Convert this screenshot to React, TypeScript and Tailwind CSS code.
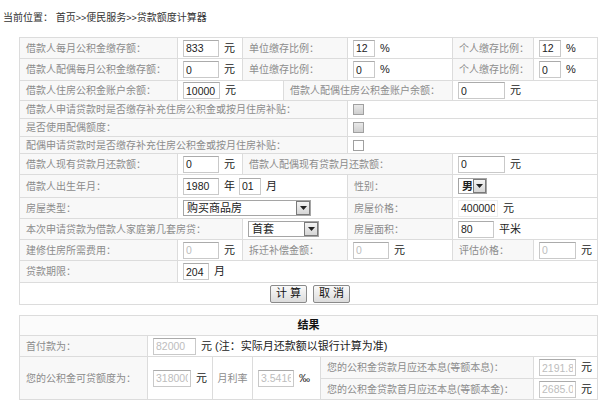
import React from "react";

type Cell = { span?: number; rows?: number; children?: React.ReactNode; className?: string };

function cn(...c: Array<string | false | null | undefined>) {
  return c.filter(Boolean).join(" ");
}

// label cell
function L({ span = 1, rows, children }: Cell) {
  return (
    <td
      colSpan={span}
      rowSpan={rows}
      className="overflow-hidden whitespace-nowrap border border-[#dcdcdc] bg-[#f8f8f8] pl-[6px] text-[10px] text-[#8c8c8c]"
    >
      {children}
    </td>
  );
}

// value cell
function V({ span = 1, rows, children, className }: Cell) {
  return (
    <td
      colSpan={span}
      rowSpan={rows}
      className={cn("overflow-hidden whitespace-nowrap border border-[#dcdcdc] bg-white pl-[5px]", className)}
    >
      <div className="flex items-center">{children}</div>
    </td>
  );
}

function Inp({ value, className, disabled }: { value: string; className: string; disabled?: boolean }) {
  return (
    <input
      readOnly
      value={value}
      className={cn(
        "h-[17px] border border-[#c9c9c9] border-t-[#ababab] bg-white px-[2px] text-[10.5px] outline-none",
        disabled ? "text-[#bdbdbd]" : "text-[#222]",
        className
      )}
    />
  );
}

function U({ children, className }: { children: React.ReactNode; className?: string }) {
  return <span className={cn("ml-[5px] text-[11px] text-[#222]", className)}>{children}</span>;
}

function Arrow() {
  return (
    <span className="flex h-[14px] w-[14px] items-center justify-center border border-[#7a7a7a] bg-gradient-to-b from-[#f4f4f4] to-[#d6d6d6]">
      <svg width="7" height="4" viewBox="0 0 7 4">
        <path d="M0 0h7L3.5 4z" fill="#222" />
      </svg>
    </span>
  );
}

function Sel({ text, className, bold }: { text: string; className: string; bold?: boolean }) {
  return (
    <div
      className={cn(
        "flex h-[16px] items-center justify-between border border-[#a5a5a5] bg-white pl-[3px] pr-0 text-[11px] text-[#222]",
        bold && "font-bold",
        className
      )}
    >
      <span>{text}</span>
      <Arrow />
    </div>
  );
}

function Chk({ gray }: { gray?: boolean }) {
  return (
    <span
      className={cn(
        "inline-block h-[11px] w-[11px] border border-[#a0a0a0]",
        gray ? "bg-gradient-to-b from-[#e9e9e9] to-[#cfcfcf]" : "bg-white"
      )}
    />
  );
}

function Btn({ children }: { children: React.ReactNode }) {
  return (
    <button className="h-[18px] rounded-[2px] border border-[#8a8a8a] bg-gradient-to-b from-[#fafafa] to-[#dcdcdc] px-[5px] text-[11px] leading-none text-[#111]">
      {children}
    </button>
  );
}

export default function App() {
  return (
    <div className="h-[401px] w-[600px] overflow-hidden bg-white font-['Liberation_Sans','Noto_Sans_CJK_SC',sans-serif]">
      <div className="pl-[3px] pt-[11px] text-[10px] leading-[13px] text-[#333]">
        当前位置： 首页<span className="text-[9px]">&gt;&gt;</span>便民服务<span className="text-[9px]">&gt;&gt;</span>贷款额度计算器
      </div>

      <table className="ml-[19px] mt-[12px] w-[578px] table-fixed border-collapse">
        <colgroup>
          <col className="w-[158px]" />
          <col className="w-[65px]" />
          <col className="w-[41px]" />
          <col className="w-[64px]" />
          <col className="w-[105px]" />
          <col className="w-[81px]" />
          <col className="w-[64px]" />
        </colgroup>
        <tbody>
          <tr className="h-[21px]">
            <L>借款人每月公积金缴存额：</L>
            <V>
              <Inp value="833" className="w-[36px]" />
              <U>元</U>
            </V>
            <L span={2}>单位缴存比例：</L>
            <V>
              <Inp value="12" className="w-[22px]" />
              <U className="ml-[4px]">%</U>
            </V>
            <L>个人缴存比例：</L>
            <V>
              <Inp value="12" className="w-[22px]" />
              <U className="ml-[4px]">%</U>
            </V>
          </tr>
          <tr className="h-[22px]">
            <L>借款人配偶每月公积金缴存额：</L>
            <V>
              <Inp value="0" className="w-[36px]" />
              <U>元</U>
            </V>
            <L span={2}>单位缴存比例：</L>
            <V>
              <Inp value="0" className="w-[22px]" />
              <U className="ml-[4px]">%</U>
            </V>
            <L>个人缴存比例：</L>
            <V>
              <Inp value="0" className="w-[22px]" />
              <U className="ml-[4px]">%</U>
            </V>
          </tr>
          <tr className="h-[20px]">
            <L>借款人住房公积金账户余额：</L>
            <V span={2}>
              <Inp value="10000" className="w-[37px] px-[1px]" />
              <U className="ml-[4px]">元</U>
            </V>
            <L span={2}>借款人配偶住房公积金账户余额：</L>
            <V span={2}>
              <Inp value="0" className="w-[47px]" />
              <U>元</U>
            </V>
          </tr>
          <tr className="h-[18px]">
            <L span={4}>借款人申请贷款时是否缴存补充住房公积金或按月住房补贴：</L>
            <V span={3}>
              <Chk gray />
            </V>
          </tr>
          <tr className="h-[18px]">
            <L span={4}>是否使用配偶额度：</L>
            <V span={3}>
              <Chk gray />
            </V>
          </tr>
          <tr className="h-[17px]">
            <L span={4}>配偶申请贷款时是否缴存补充住房公积金或按月住房补贴：</L>
            <V span={3}>
              <Chk />
            </V>
          </tr>
          <tr className="h-[21px]">
            <L>借款人现有贷款月还款额：</L>
            <V>
              <Inp value="0" className="w-[36px]" />
              <U>元</U>
            </V>
            <L span={3}>借款人配偶现有贷款月还款额：</L>
            <V span={2}>
              <Inp value="0" className="w-[47px]" />
              <U>元</U>
            </V>
          </tr>
          <tr className="h-[23px]">
            <L>借款人出生年月：</L>
            <V span={3}>
              <Inp value="1980" className="w-[36px]" />
              <U className="ml-[4px]">年</U>
              <Inp value="01" className="ml-[4px] w-[22px]" />
              <U>月</U>
            </V>
            <L>性别：</L>
            <V span={2}>
              <Sel text="男" bold className="w-[29px]" />
            </V>
          </tr>
          <tr className="h-[21px]">
            <L>房屋类型：</L>
            <V span={3}>
              <Sel text="购买商品房" className="w-[128px]" />
            </V>
            <L>房屋价格：</L>
            <V span={2}>
              <Inp value="400000" className="w-[40px] border-[#eeeeee] border-t-[#eeeeee] px-0" />
              <U className="ml-[1px]">元</U>
            </V>
          </tr>
          <tr className="h-[21px]">
            <L span={2}>本次申请贷款为借款人家庭第几套房贷：</L>
            <V span={2}>
              <Sel text="首套" className="w-[71px]" />
            </V>
            <L>房屋面积：</L>
            <V span={2}>
              <Inp value="80" className="w-[36px]" />
              <U>平米</U>
            </V>
          </tr>
          <tr className="h-[21px]">
            <L>建修住房所需费用：</L>
            <V>
              <Inp value="0" disabled className="w-[36px]" />
              <U>元</U>
            </V>
            <L span={2}>拆迁补偿金额：</L>
            <V>
              <Inp value="0" disabled className="w-[36px]" />
              <U>元</U>
            </V>
            <L>评估价格：</L>
            <V>
              <Inp value="0" disabled className="w-[37px]" />
              <U>元</U>
            </V>
          </tr>
          <tr className="h-[22px]">
            <L>贷款期限：</L>
            <V span={6}>
              <Inp value="204" className="w-[26px]" />
              <U>月</U>
            </V>
          </tr>
          <tr className="h-[22px]">
            <td colSpan={7} className="border border-[#dcdcdc] bg-white">
              <div className="flex justify-center gap-[6px] pl-[3px]">
                <Btn>计 算</Btn>
                <Btn>取 消</Btn>
              </div>
            </td>
          </tr>
        </tbody>
      </table>

      <table className="ml-[19px] mt-[10px] w-[578px] table-fixed border-collapse">
        <colgroup>
          <col className="w-[128px]" />
          <col className="w-[65px]" />
          <col className="w-[40px]" />
          <col className="w-[68px]" />
          <col className="w-[213px]" />
          <col className="w-[64px]" />
        </colgroup>
        <tbody>
          <tr className="h-[20px]">
            <td colSpan={6} className="border border-[#dcdcdc] bg-[#fbfbfb] text-center text-[11px] font-bold text-[#111]">
              结果
            </td>
          </tr>
          <tr className="h-[21px]">
            <L>首付款为：</L>
            <V span={5}>
              <Inp value="82000" disabled className="w-[43px]" />
              <U>元 (注：实际月还款额以银行计算为准)</U>
            </V>
          </tr>
          <tr className="h-[22px]">
            <L rows={2}>您的公积金可贷额度为：</L>
            <V rows={2}>
              <Inp value="318000" disabled className="w-[38px] px-0" />
              <U className="ml-[2px]">元</U>
            </V>
            <td rowSpan={2} className="border border-[#dcdcdc] bg-white text-center text-[10px] text-[#8c8c8c]">
              月利率
            </td>
            <V rows={2}>
              <Inp value="3.54166" disabled className="w-[36px] px-[1px]" />
              <U>‰</U>
            </V>
            <L>您的公积金贷款月应还本息(等额本息)：</L>
            <V>
              <Inp value="2191.83" disabled className="w-[37px] px-[1px]" />
              <U>元</U>
            </V>
          </tr>
          <tr className="h-[21px]">
            <L>您的公积金贷款首月应还本息(等额本金)：</L>
            <V>
              <Inp value="2685.07" disabled className="w-[37px] px-[1px]" />
              <U>元</U>
            </V>
          </tr>
        </tbody>
      </table>
    </div>
  );
}
